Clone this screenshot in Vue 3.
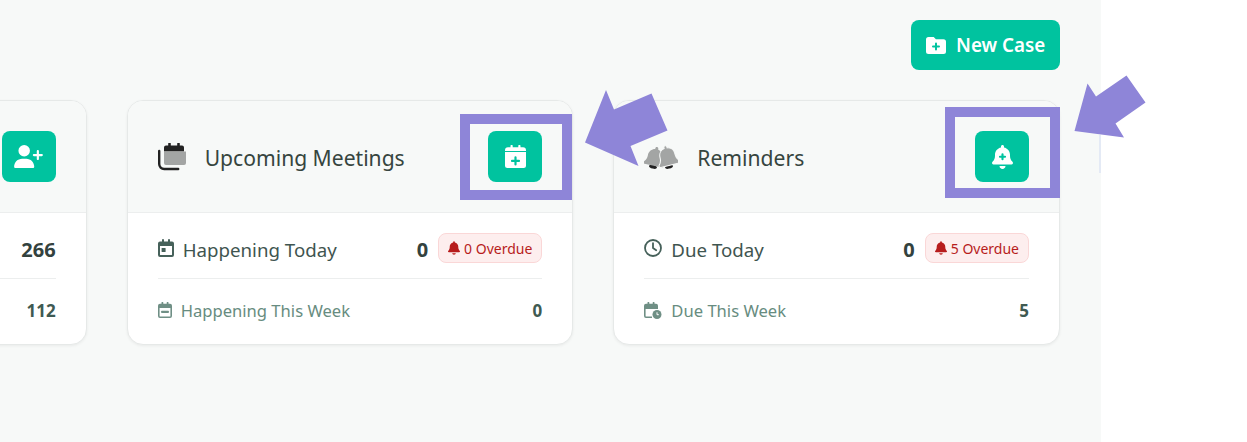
<script setup>
const bell = 'M224 0c-17.7 0-32 14.3-32 32V51.2C119 66 64 130.6 64 208v18.8c0 47-17.3 92.4-48.5 127.6l-7.4 8.3c-8.4 9.4-10.4 22.9-5.3 34.4S19.4 416 32 416H416c12.6 0 24-7.4 29.2-18.9s3.1-25-5.3-34.4l-7.4-8.3C401.3 319.2 384 273.9 384 226.8V208c0-77.4-55-142-128-156.8V32c0-17.7-14.3-32-32-32zm45.3 493.3c12-12 18.7-28.3 18.7-45.3H224 160c0 17 6.7 33.3 18.7 45.3s28.3 18.7 45.3 18.7s33.3-6.7 45.3-18.7z'
const bellBody = 'M224 0c-17.7 0-32 14.3-32 32V51.2C119 66 64 130.6 64 208v18.8c0 47-17.3 92.4-48.5 127.6l-7.4 8.3c-8.4 9.4-10.4 22.9-5.3 34.4S19.4 416 32 416H416c12.6 0 24-7.4 29.2-18.9s3.1-25-5.3-34.4l-7.4-8.3C401.3 319.2 384 273.9 384 226.8V208c0-77.4-55-142-128-156.8V32c0-17.7-14.3-32-32-32z'
const userPlus = 'M96 128a128 128 0 1 1 256 0A128 128 0 1 1 96 128zM0 482.3C0 383.8 79.8 304 178.3 304h91.4C368.2 304 448 383.8 448 482.3c0 16.4-13.3 29.7-29.7 29.7H29.7C13.3 512 0 498.7 0 482.3zM504 312V248H440c-13.3 0-24-10.7-24-24s10.7-24 24-24h64V136c0-13.3 10.7-24 24-24s24 10.7 24 24v64h64c13.3 0 24 10.7 24 24s-10.7 24-24 24H552v64c0 13.3-10.7 24-24 24s-24-10.7-24-24z'
</script>

<template>
  <div class="page">
    <div class="content">
      <div class="toolbar">
        <button class="new-case">
          <svg class="folder" viewBox="0 0 20 17" width="20" height="17">
            <path d="M2.5 0h5.2l2.2 2.2H17.5A2.5 2.5 0 0 1 20 4.7V14.5A2.5 2.5 0 0 1 17.5 17H2.500A2.5 2.5 0 0 1 0 14.5V2.500A2.5 2.5 0 0 1 2.5 0z" fill="#fff"/>
            <path d="M10 6.600v6M7 9.600h6" stroke="#00c39f" stroke-width="2" stroke-linecap="round"/>
          </svg>
          New Case
        </button>
      </div>

      <div class="cards">
        <section class="card">
          <header class="card-head">
            <span></span>
            <button class="action">
              <svg viewBox="0 0 640 512" width="29" height="23"><path :d="userPlus" fill="#fff"/></svg>
            </button>
          </header>
          <div class="card-body">
            <div class="row primary"><span></span><span class="num">266</span></div>
            <div class="row secondary"><span></span><span class="num">112</span></div>
          </div>
        </section>

        <section class="card">
          <header class="card-head">
            <span class="title-wrap">
              <svg class="head-icon" viewBox="0 0 28 28" width="28" height="28">
                <path d="M1.200 8v13a5 5 0 0 0 5 5h14" fill="none" stroke="#222" stroke-width="2.400" stroke-linecap="round"/>
                <path d="M6 8.500V4.500a2 2 0 0 1 2-2h2.200V.8a1.300 1.300 0 0 1 2.600 0v1.700h6.400V.8a1.300 1.300 0 0 1 2.600 0v1.700h2.200a2 2 0 0 1 2 2v4z" fill="#222"/>
                <path d="M6 8.500h22V20a2 2 0 0 1-2 2H8a2 2 0 0 1-2-2z" fill="#a3a5a4"/>
              </svg>
              <span class="title">Upcoming Meetings</span>
            </span>
            <button class="action">
              <svg viewBox="0 0 21 23" width="21" height="23">
                <path d="M3 2.200h2.500V1a1.100 1.100 0 0 1 2.200 0v1.200h5.600V1a1.100 1.100 0 0 1 2.200 0v1.200H18a3 3 0 0 1 3 3v.7H0v-.7a3 3 0 0 1 3-3zM0 6.900h21V20.500a2.500 2.500 0 0 1-2.500 2.500H2.500A2.500 2.500 0 0 1 0 20.500z" fill="#fff"/>
                <path d="M10.500 12.400v7M7 15.900h7" stroke="#00c39f" stroke-width="2.200" stroke-linecap="round"/>
              </svg>
            </button>
          </header>
          <div class="card-body">
            <div class="row primary">
              <span class="label">
                <svg class="row-icon" viewBox="0 0 16 18" width="16" height="18">
                  <path d="M2 2.500h2V1a1 1 0 0 1 2 0v1.500h4V1a1 1 0 0 1 2 0v1.500h2a2 2 0 0 1 2 2V16a2 2 0 0 1-2 2H2a2 2 0 0 1-2-2V4.500a2 2 0 0 1 2-2zM2 7v8.500a.5.5 0 0 0 .5.5h11a.5.5 0 0 0 .5-.5V7z" fill="#46615a" fill-rule="evenodd"/>
                  <rect x="3.600" y="9" width="4" height="4" rx=".6" fill="#46615a"/>
                </svg>
                Happening Today
              </span>
              <span class="values">
                <span class="num">0</span>
                <span class="badge"><svg viewBox="0 0 448 512" width="12" height="14"><path :d="bell" fill="#b71c1c"/></svg>0 Overdue</span>
              </span>
            </div>
            <div class="row secondary">
              <span class="label">
                <svg class="row-icon" viewBox="0 0 14 16" width="14" height="16">
                  <path d="M2 1.800h1.500V.8a.9.9 0 0 1 1.800 0v1h3.400v-1a.9.9 0 0 1 1.800 0v1H12a2 2 0 0 1 2 2V14a2 2 0 0 1-2 2H2a2 2 0 0 1-2-2V3.800a2 2 0 0 1 2-2zM1.600 6v8a.5.5 0 0 0 .5.5h9.800a.5.5 0 0 0 .5-.5V6z" fill="#6f8f85" fill-rule="evenodd"/>
                  <rect x="3.200" y="8.800" width="7.600" height="2.200" rx=".5" fill="#6f8f85"/>
                </svg>
                Happening This Week
              </span>
              <span class="num">0</span>
            </div>
          </div>
        </section>

        <section class="card">
          <header class="card-head">
            <span class="title-wrap">
              <svg class="head-icon" viewBox="0 0 34 24" width="34" height="24">
                <ellipse cx="9" cy="21.800" rx="4" ry="1.800" fill="#222" transform="rotate(14 9 21.800)"/>
                <ellipse cx="25" cy="21.800" rx="4" ry="1.800" fill="#222" transform="rotate(-14 25 21.800)"/>
                <g transform="translate(1 1.500) rotate(12 9 9) scale(.046)">
                  <path :d="bellBody" fill="#a3a5a4"/>
                </g>
                <g transform="translate(12.500 1) rotate(-14 9 9) scale(.048)">
                  <path :d="bellBody" fill="#a3a5a4" stroke="#f7f9f8" stroke-width="22"/>
                </g>
              </svg>
              <span class="title">Reminders</span>
            </span>
            <button class="action">
              <svg viewBox="0 0 448 512" width="21" height="24">
                <path :d="bell" fill="#fff"/>
                <path d="M224 197v107M170 250h108" stroke="#00c39f" stroke-width="46" stroke-linecap="round"/>
              </svg>
            </button>
          </header>
          <div class="card-body">
            <div class="row primary">
              <span class="label">
                <svg class="row-icon" viewBox="0 0 18 18" width="18" height="18">
                  <circle cx="9" cy="9" r="8" fill="none" stroke="#46615a" stroke-width="1.800"/>
                  <path d="M9 4.200V9l3.200 2.200" fill="none" stroke="#46615a" stroke-width="1.800" stroke-linecap="round" stroke-linejoin="round"/>
                </svg>
                Due Today
              </span>
              <span class="values">
                <span class="num">0</span>
                <span class="badge"><svg viewBox="0 0 448 512" width="12" height="14"><path :d="bell" fill="#b71c1c"/></svg>5 Overdue</span>
              </span>
            </div>
            <div class="row secondary">
              <span class="label">
                <svg class="row-icon" viewBox="0 0 18 17" width="18" height="17">
                  <path d="M2 1.800h1.500V.8a.9.9 0 0 1 1.800 0v1h3.400v-1a.9.9 0 0 1 1.800 0v1H12a2 2 0 0 1 2 2V7H1.600v7a.5.5 0 0 0 .5.5H8V16H2a2 2 0 0 1-2-2V3.800a2 2 0 0 1 2-2z" fill="#6f8f85"/>
                  <circle cx="13" cy="12.500" r="4.500" fill="#6f8f85"/>
                  <path d="M13 10.300v2.400h1.800" fill="none" stroke="#fff" stroke-width="1"/>
                </svg>
                Due This Week
              </span>
              <span class="num">5</span>
            </div>
          </div>
        </section>
      </div>
    </div>

    <span class="scroll-sliver"></span>
    <span class="mark mark-a"></span>
    <span class="mark mark-b"></span>
    <svg class="arrows" width="1247" height="442" viewBox="0 0 1247 442">
      <polygon points="585,142.500 606,90 614,109.500 651.500,93.500 667.500,130.500 630.500,146 638.500,166" fill="#8e85d8"/>
      <polygon points="1074.500,131 1087.500,83.500 1096,96.500 1126.500,75.500 1145.500,102.500 1115.500,123.500 1124,137.500" fill="#8e85d8"/>
    </svg>
  </div>
</template>

<style>
html, body { margin: 0; background: #fff; }
</style>

<style scoped>
.page {
  position: relative;
  width: 1247px;
  height: 442px;
  overflow: hidden;
  background: #fff;
  font-family: "Noto Sans", "Open Sans", sans-serif;
}
.content {
  width: 1101px;
  height: 442px;
  box-sizing: border-box;
  padding: 20px 41px 0 0;
  background: #f7f9f8;
  overflow: hidden;
  display: flex;
  flex-direction: column;
}
.toolbar { display: flex; justify-content: flex-end; }
.new-case {
  display: flex;
  align-items: center;
  gap: 10px;
  height: 50px;
  width: 149px;
  padding: 0 0 0 15px;
  border: 0;
  border-radius: 8px;
  background: #00c39f;
  color: #fff;
  font: 600 18.800px "Noto Sans", sans-serif;
}
.cards {
  display: flex;
  justify-content: flex-end;
  gap: 40px;
  margin-top: 30px;
}
.card {
  flex: 0 0 446.670px;
  height: 245px;
  box-sizing: border-box;
  border: 1px solid #e6e9e8;
  border-radius: 16px;
  overflow: hidden;
  background: #fff;
  box-shadow: 0 1px 3px rgba(0, 0, 0, .06);
  display: flex;
  flex-direction: column;
}
.card-head {
  height: 112px;
  box-sizing: border-box;
  padding: 0 30px;
  background: #f7f9f8;
  border-bottom: 1px solid #eceeee;
  display: flex;
  align-items: center;
  justify-content: space-between;
}
.title-wrap { display: flex; align-items: center; gap: 19px; }
.title { margin-top: 2px; font-size: 21.100px; color: #36453f; }
.action {
  width: 54px;
  height: 51px;
  padding: 0;
  border: 0;
  border-radius: 8px;
  background: #00c39f;
  display: flex;
  align-items: center;
  justify-content: center;
}
.card-body { flex: 1; padding: 20px 30px 0; }
.row { display: flex; align-items: center; justify-content: space-between; }
.primary { height: 30px; padding-bottom: 15px; border-bottom: 1px solid #eceeee; color: #3f5550; font-size: 18.700px; }
.primary .label { padding-top: 2px; }
.primary .label svg { margin-top: -2px; }
.primary .num { margin-top: 2px; }
.secondary { height: 24px; margin-top: 19px; color: #678c80; font-size: 16.600px; }
.label { display: flex; align-items: center; gap: 9px; }
.values { display: flex; align-items: center; gap: 10px; }
.num { font-weight: 700; font-size: 20px; color: #33423e; }
.secondary .num { font-size: 17px; color: #3f5a52; }
.badge {
  display: flex;
  align-items: center;
  gap: 4px;
  height: 30px;
  box-sizing: border-box;
  padding: 0 9px;
  border: 1px solid #fad7d7;
  border-radius: 8px;
  background: #fdeeee;
  color: #b71c1c;
  font-size: 14px;
}
.scroll-sliver {
  position: absolute;
  left: 1099px;
  top: 135px;
  width: 2px;
  height: 38px;
  background: #e4eaf5;
}
.mark {
  position: absolute;
  box-sizing: border-box;
  border: 10px solid #8e85d8;
}
.mark-a { left: 460px; top: 114px; width: 112px; height: 86px; }
.mark-b { left: 945px; top: 107px; width: 115px; height: 91px; }
.arrows { position: absolute; left: 0; top: 0; pointer-events: none; }
</style>
